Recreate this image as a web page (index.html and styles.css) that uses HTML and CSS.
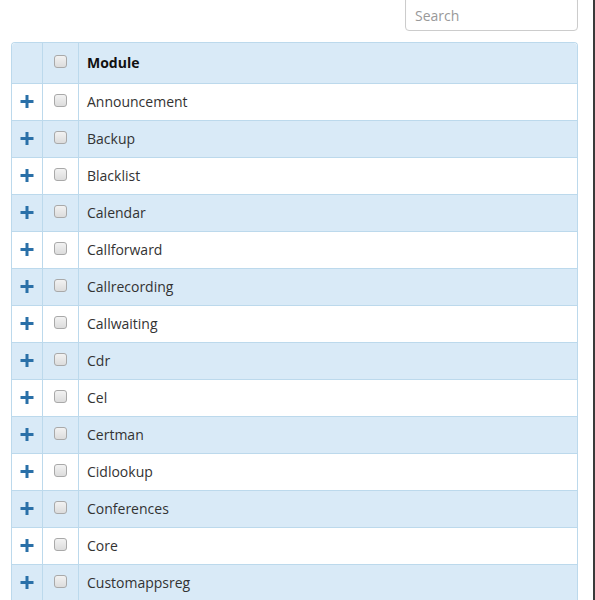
FILE: index.html
```html
<!DOCTYPE html>
<html>
<head>
<meta charset="utf-8">
<link rel="stylesheet" href="styles.css">
</head>
<body>
<div class="page">
  <div class="toolbar">
    <input class="search" type="text" placeholder="Search">
  </div>
  <table class="grid">
    <thead>
      <tr>
        <th class="c-exp"></th>
        <th class="c-chk"><span class="chk"></span></th>
        <th class="c-name">Module</th>
      </tr>
    </thead>
    <tbody id="rows"></tbody>
  </table>
</div>
<script>
var names=["Announcement","Backup","Blacklist","Calendar","Callforward","Callrecording","Callwaiting","Cdr","Cel","Certman","Cidlookup","Conferences","Core","Customappsreg"];
var tb=document.getElementById('rows');
names.forEach(function(n){
  var tr=document.createElement('tr');
  tr.innerHTML='<td class="c-exp"><svg class="plus" width="14" height="13" viewBox="0 0 14 13"><rect x="5.5" y="0" width="3" height="13" fill="#2a70a8"/><rect x="0.5" y="5" width="13" height="3" fill="#2a70a8"/></svg></td><td class="c-chk"><span class="chk"></span></td><td class="c-name"></td>';
  tr.lastChild.textContent=n;
  tb.appendChild(tr);
});
</script>
</body>
</html>
```
FILE: styles.css
```css
html, body {
  margin: 0;
  padding: 0;
  background: #fff;
}
body {
  font-family: "Open Sans", "Liberation Sans", sans-serif;
  font-size: 14px;
  color: #333;
  overflow: hidden;
}
.page {
  box-sizing: border-box;
  width: 595px;
  height: 600px;
  border-right: 2px solid #3a3a3a;
  padding-right: 1px;
}
.toolbar {
  display: flex;
  justify-content: flex-end;
  padding-right: 14px;
  height: 42px;
}
.search {
  box-sizing: border-box;
  width: 173px;
  height: 35px;
  margin-top: -4px;
  border: 1px solid #ccc;
  border-radius: 4px;
  padding: 3px 9px 0;
  font-family: "Open Sans", "Liberation Sans", sans-serif;
  font-size: 14px;
  color: #555;
  outline: none;
  box-shadow: inset 0 1px 1px rgba(0,0,0,0.075);
}
.search::placeholder {
  color: #999;
}
.grid {
  margin-left: 11px;
  width: 567px;
  border-collapse: separate;
  border-spacing: 0;
  border: 1px solid #bcd9ec;
  border-bottom: none;
  border-radius: 4px 4px 0 0;
}
.grid th, .grid td {
  border-left: 1px solid #bcd9ec;
  border-bottom: 1px solid #bcd9ec;
  padding: 0 0 2px;
  text-align: left;
  vertical-align: middle;
}
.grid th:first-child, .grid td:first-child {
  border-left: none;
}
.grid th {
  height: 38px;
  background: #d9eaf7;
  font-weight: bold;
  color: #111;
}
.grid td {
  height: 34px;
}
.grid tbody tr:nth-child(even) td {
  background: #d9eaf7;
}
.grid tbody tr:nth-child(odd) td {
  background: #fff;
}
.grid thead th:first-child { border-top-left-radius: 4px; }
.grid thead th:last-child { border-top-right-radius: 4px; }
.c-exp {
  width: 30px;
  text-align: center !important;
}
.c-chk {
  width: 35px;
  text-align: center !important;
}
.c-name {
  padding-left: 8px !important;
}
.plus {
  display: block;
  margin: 0 auto 0 8px;
}
.chk {
  display: inline-block;
  box-sizing: border-box;
  width: 13px;
  height: 13px;
  border: 1px solid #a9a9a9;
  border-radius: 3px;
  background: linear-gradient(#f2f2f2, #dcdcdc);
  vertical-align: middle;
  margin-top: -4px;
}
```
